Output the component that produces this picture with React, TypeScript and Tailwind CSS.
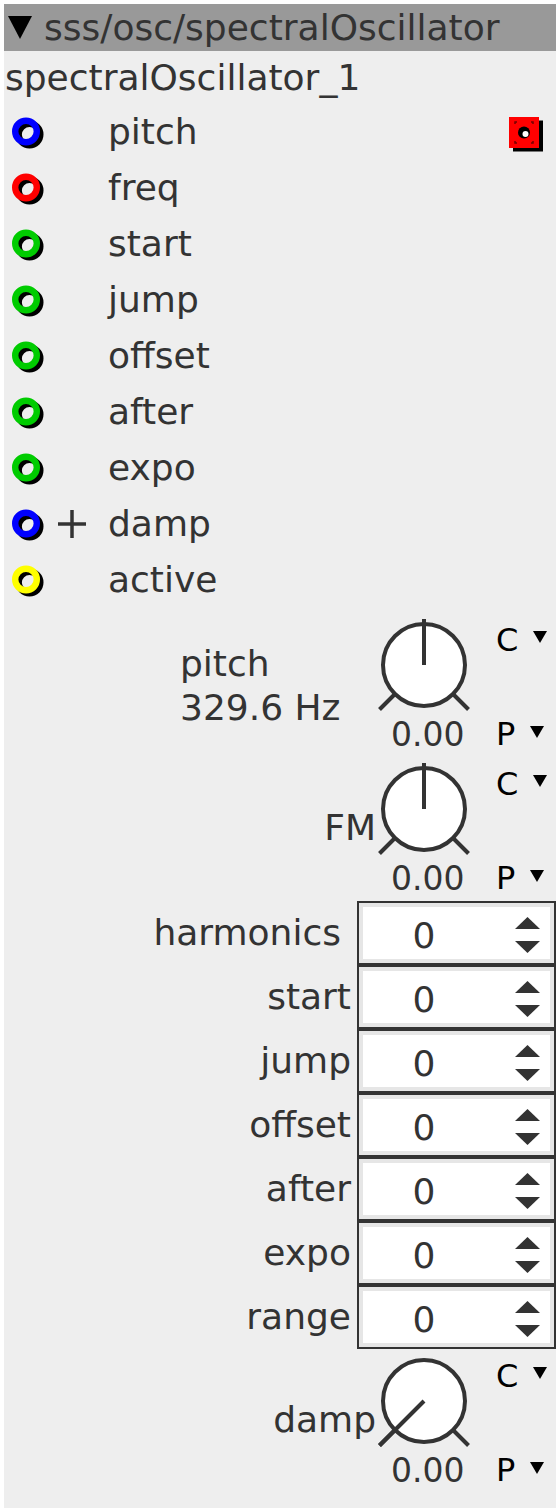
const PORTS = [
  { name: 'pitch', color: '#0000ff' },
  { name: 'freq', color: '#ff0000' },
  { name: 'start', color: '#00cc00' },
  { name: 'jump', color: '#00cc00' },
  { name: 'offset', color: '#00cc00' },
  { name: 'after', color: '#00cc00' },
  { name: 'expo', color: '#00cc00' },
  { name: 'damp', color: '#0000ff', plus: true },
  { name: 'active', color: '#ffff00' },
];

const NUMBERS = ['harmonics', 'start', 'jump', 'offset', 'after', 'expo', 'range'];

function Ring({ color }: { color: string }) {
  return (
    <svg width={36} height={36} viewBox="0 0 36 36">
      <circle cx={17.5} cy={20.5} r={10.8} fill="none" stroke="#000" strokeWidth={6.4} />
      <circle cx={14} cy={17.5} r={10.8} fill="none" stroke={color} strokeWidth={6.4} />
    </svg>
  );
}

function OutPort() {
  return (
    <svg width={40} height={40} viewBox="0 0 40 40">
      <rect x={4} y={8.5} width={30} height={31} fill="#000" />
      <rect x={0} y={5} width={30} height={31} fill="#ff0000" />
      <g stroke="#700" strokeWidth={1.5}>
        <path d="M6 12 v-2 h2 M22 10 h2 v2 M6 29 v2 h2 M22 31 h2 v-2" fill="none" />
      </g>
      <circle cx={15} cy={20.5} r={6} fill="#000" />
      <circle cx={16.5} cy={22} r={3} fill="#fff" />
    </svg>
  );
}

function Tri() {
  return (
    <svg width={14} height={12} viewBox="0 0 14 12">
      <polygon points="0,0 14,0 7,12" fill="#000" />
    </svg>
  );
}

function Knob({ min = false }: { min?: boolean }) {
  return (
    <svg width={100} height={100} viewBox="0 0 100 100">
      <circle cx={50} cy={52} r={41} fill="#fff" stroke="#333" strokeWidth={4} />
      <line x1={21} y1={81} x2={5.5} y2={96.5} stroke="#333" strokeWidth={4} />
      <line x1={79} y1={81} x2={94.5} y2={96.5} stroke="#333" strokeWidth={4} />
      {min ? (
        <line x1={50} y1={52} x2={5.5} y2={96.5} stroke="#333" strokeWidth={4} />
      ) : (
        <line x1={50} y1={52} x2={50} y2={6} stroke="#333" strokeWidth={4} />
      )}
    </svg>
  );
}

function KnobBlock({ label, min = false }: { label: React.ReactNode; min?: boolean }) {
  return (
    <div className="flex h-[144px]">
      <div className="w-[370px]">{label}</div>
      <div className="w-[100px] flex flex-col">
        <Knob min={min} />
        <div className="h-[44px] leading-[44px] pl-[17px] text-[33px] text-[#333]">0.00</div>
      </div>
      <div className="flex-1 flex flex-col justify-between pt-[10px] pb-[6px] pl-[22px] text-[32px] text-black">
        <div className="flex items-center h-[34px] gap-[15px]">
          <span>C</span>
          <span className="mb-[6px]"><Tri /></span>
        </div>
        <div className="flex items-center h-[34px] gap-[15px]">
          <span>P</span>
          <span className="mb-[4px]"><Tri /></span>
        </div>
      </div>
    </div>
  );
}

function Spinner() {
  return (
    <svg width={25} height={36} viewBox="0 0 25 36">
      <polygon points="0,12 12.5,0 25,12" fill="#333" />
      <polygon points="0,24 25,24 12.5,36" fill="#333" />
    </svg>
  );
}

export default function App() {
  return (
    <div className="min-h-screen bg-white p-[4px]">
      <div className="w-[552px] bg-[#eeeeee] pb-[15px] font-['DejaVu_Sans',sans-serif] text-[#333]">

        {/* header */}
        <div className="h-[47px] bg-[#999999] flex items-center">
          <svg width={24} height={23} viewBox="0 0 24 23" className="ml-[4px]">
            <polygon points="0,0 24,0 12,23" fill="#000" />
          </svg>
          <span className="ml-[12px] text-[36px] leading-[47px]">sss/osc/spectralOscillator</span>
        </div>

        <div className="h-[53px] flex items-center pl-[1px] text-[36px]">spectralOscillator_1</div>

        {/* ports */}
        {PORTS.map((p, i) => (
          <div key={p.name} className="h-[56px] flex items-center text-[36px]">
            <div className="w-[50px] pl-[8px] flex items-center">
              <Ring color={p.color} />
            </div>
            <div className="w-[54px] pl-[4px] flex items-center">
              {p.plus && (
                <svg width={28} height={28} viewBox="0 0 28 28">
                  <line x1={0} y1={14} x2={28} y2={14} stroke="#333" strokeWidth={3.5} />
                  <line x1={14} y1={0} x2={14} y2={28} stroke="#333" strokeWidth={3.5} />
                </svg>
              )}
            </div>
            <span>{p.name}</span>
            {i === 0 && (
              <div className="ml-auto mr-[7px]">
                <OutPort />
              </div>
            )}
          </div>
        ))}

        <div className="h-[5px]" />

        <KnobBlock
          label={
            <div className="pt-[29px] pl-[176px] text-[36px] leading-[44px]">
              <div>pitch</div>
              <div>329.6 Hz</div>
            </div>
          }
        />
        <KnobBlock label={<div className="pt-[49px] -mr-[2px] text-right text-[36px] leading-[44px]">FM</div>} />

        {/* number boxes */}
        {NUMBERS.map((n, i) => (
          <div key={n} className="h-[64px] flex items-center">
            <div className={`w-[353px] text-right text-[36px] ${i === 0 ? 'pr-[16px]' : 'pr-[6px]'}`}>{n}</div>
            <div className="w-[199px] h-[64px] border-2 border-[#333]">
              <div className="h-full border-[4px] border-[#e6e6e6] bg-white flex items-center">
                <span className="w-[122px] mt-[5px] text-center text-[36px]">0</span>
                <span className="ml-[30px] mt-[4px] flex items-center">
                  <Spinner />
                </span>
              </div>
            </div>
          </div>
        ))}

        <KnobBlock min label={<div className="pt-[49px] -mr-[2px] text-right text-[36px] leading-[44px]">damp</div>} />
      </div>
    </div>
  );
}
